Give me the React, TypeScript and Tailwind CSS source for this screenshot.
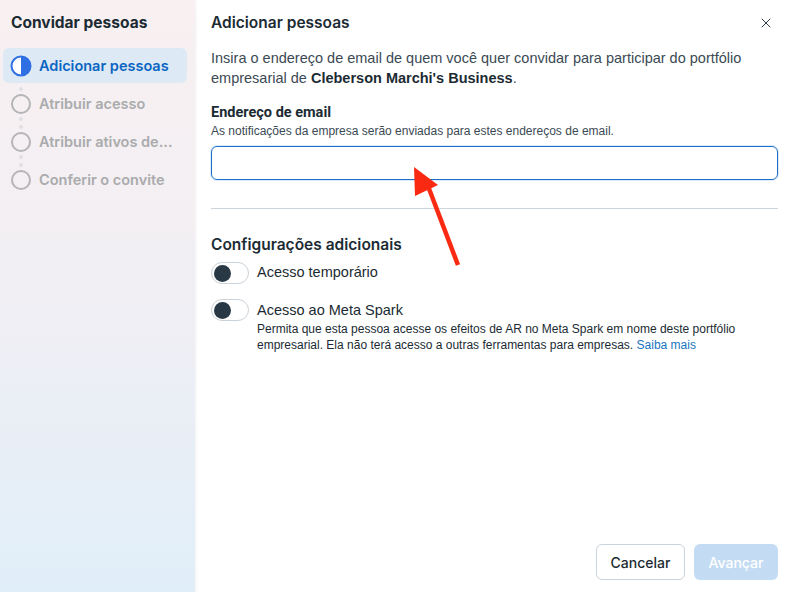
import { X } from "lucide-react";

const steps = [
  { label: "Adicionar pessoas", active: true },
  { label: "Atribuir acesso", active: false },
  { label: "Atribuir ativos de...", active: false },
  { label: "Conferir o convite", active: false },
];

const dotTops = [87, 117, 125, 155, 163];

function StepIcon({ active }: { active: boolean }) {
  if (active) {
    return (
      <svg width="22" height="22" viewBox="0 0 22 22" className="shrink-0">
        <circle cx="11" cy="11" r="9.5" fill="white" stroke="#2f6fe4" strokeWidth="2" />
        <path d="M11 1.5 A9.5 9.5 0 0 1 11 20.5 Z" fill="#2f6fe4" />
      </svg>
    );
  }
  return (
    <svg width="22" height="22" viewBox="0 0 22 22" className="shrink-0">
      <circle cx="11" cy="11" r="9" fill="none" stroke="#b5b5b7" strokeWidth="2" />
    </svg>
  );
}

function Toggle() {
  return (
    <div className="w-[38px] h-[22px] rounded-full border border-[#cbd2d9] bg-white flex items-center px-[2px] shrink-0">
      <div className="w-[17px] h-[17px] rounded-full bg-[#283845]" />
    </div>
  );
}

export default function App() {
  return (
    <div className="relative w-[790px] h-[592px] flex bg-white overflow-hidden font-['Liberation_Sans',sans-serif] text-[#1c2b33]">
      {/* Sidebar */}
      <div className="relative w-[195px] h-full bg-gradient-to-b from-[#f8f0f1] via-[#f1eff4] to-[#e0eef9] shadow-[1px_0_3px_rgba(0,0,0,0.06)] pl-[3px] pr-[8px] pt-[12px] font-['Inter',sans-serif]">
        {dotTops.map((t) => (
          <span
            key={t}
            className="absolute left-[19px] w-[4px] h-[4px] rounded-full bg-[#e1dfe3]"
            style={{ top: t }}
          />
        ))}
        <h1 className="relative px-[8px] pt-[1px] text-[15.5px] font-bold leading-[20px] text-[#1c2b33]">Convidar pessoas</h1>
        <div className="relative mt-[15px] flex flex-col gap-[3px]">
          {steps.map((s) => (
            <div
              key={s.label}
              className={
                s.active
                  ? "h-[35px] rounded-[6px] bg-[#dde9f5] flex items-center gap-[7px] px-[7px]"
                  : "h-[35px] flex items-center gap-[7px] px-[7px]"
              }
            >
              <StepIcon active={s.active} />
              <span
                className={
                  s.active
                    ? "text-[14.5px] font-semibold text-[#0b65c2] truncate"
                    : "text-[14.5px] font-semibold text-[#a9abad] truncate"
                }
              >
                {s.label}
              </span>
            </div>
          ))}
        </div>
      </div>

      {/* Main */}
      <div className="flex-1 flex flex-col pl-[16px] pr-[12px] pt-[12px] pb-[12px]">
        <div className="flex items-center justify-between h-[20px] pt-[1px]">
          <h2 className="text-[15.5px] font-semibold font-['Inter',sans-serif]">Adicionar pessoas</h2>
          <X className="w-[16px] h-[16px] text-[#2b3a44] mr-[4px]" strokeWidth={1.5} />
        </div>
        <p className="mt-[16px] text-[14.5px] leading-[20px] text-[#3b4a54] pr-[20px]">
          Insira o endereço de email de quem você quer convidar para participar do portfólio empresarial de{" "}
          <span className="font-bold text-[#1c2b33]">Cleberson Marchi's Business</span>.
        </p>
        <div className="mt-[16px] text-[14.5px] font-bold leading-[18px] font-['Roboto',sans-serif]">
          Endereço de email
        </div>
        <div className="text-[12px] leading-[16px] text-[#3b4a54] mt-[1px]">
          As notificações da empresa serão enviadas para estes endereços de email.
        </div>
        <input
          type="text"
          className="mt-[7px] h-[34px] w-full rounded-[6px] border border-[#1b70c7] shadow-[0_0_0_1px_rgba(27,112,199,0.15)] outline-none px-[10px]"
        />
        <div className="mt-[28px] h-px bg-[#cdd5dc]" />
        <div className="mt-[26px] text-[15.5px] font-semibold font-['Inter',sans-serif] leading-[20px]">
          Configurações adicionais
        </div>
        <div className="mt-[7px] flex items-center gap-[8px]">
          <Toggle />
          <span className="text-[14.5px] text-[#1c2b33]">Acesso temporário</span>
        </div>
        <div className="mt-[15px] flex items-start gap-[8px]">
          <Toggle />
          <div>
            <div className="text-[14.5px] leading-[22px] text-[#1c2b33]">Acesso ao Meta Spark</div>
            <div className="text-[12px] leading-[16px] text-[#1c2b33]">
              Permita que esta pessoa acesse os efeitos de AR no Meta Spark em nome deste portfólio empresarial. Ela não
              terá acesso a outras ferramentas para empresas. <span className="text-[#1a73c0]">Saiba mais</span>
            </div>
          </div>
        </div>
        <div className="mt-auto flex justify-end gap-[9px]">
          <button className="h-[36px] w-[89px] rounded-[6px] border border-[#ccd3d9] bg-white text-[14px] font-medium text-[#1c2b33] font-['Inter',sans-serif]">
            Cancelar
          </button>
          <button className="h-[36px] w-[84px] rounded-[6px] bg-[#c3dcf3] text-[14px] font-medium text-white font-['Inter',sans-serif]">
            Avançar
          </button>
        </div>
      </div>

      {/* annotation arrow */}
      <svg className="absolute left-0 top-0 pointer-events-none" width="790" height="592">
        <line x1="458" y1="265" x2="428" y2="186" stroke="#fa2a12" strokeWidth="4.5" />
        <polygon points="414,167 415,196 438,185" fill="#fa2a12" />
      </svg>
    </div>
  );
}
